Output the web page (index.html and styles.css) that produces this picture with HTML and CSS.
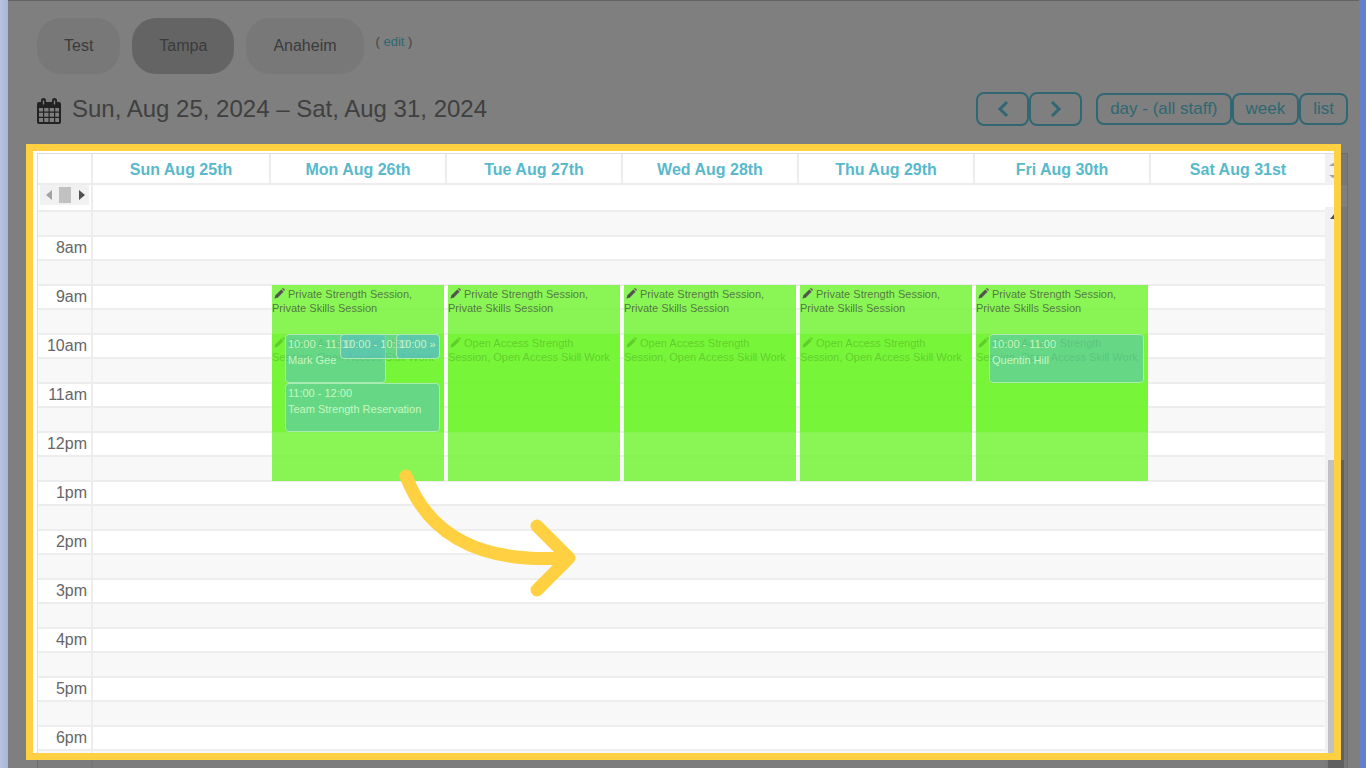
FILE: index.html
```html
<!DOCTYPE html>
<html lang="en">
<head>
<meta charset="utf-8">
<title>Staff schedule</title>
<link rel="stylesheet" href="styles.css">
</head>
<body>
<svg class="defs" aria-hidden="true">
  <symbol id="pencil" viewBox="0 0 12 12"><path d="M0.500 11.500 1.500 8 8 1.500 10.500 4 4 10.500ZM8.700 0.900 9.500 0.300Q10.300 0 11 0.800 12 1.700 11.700 2.500L11.100 3.300Z"/></symbol>
</svg>
<main class="page">
  <nav class="locations" aria-label="Locations">
    <button class="pill" type="button">Test</button>
    <button class="pill pill-active" type="button">Tampa</button>
    <button class="pill" type="button">Anaheim</button>
    <span class="edit">( <a href="#edit">edit</a> )</span>
  </nav>
  <header class="toolbar">
    <svg class="cal-icon" viewBox="0 0 24 26" aria-hidden="true">
      <path fill-rule="evenodd" d="M2 4H4V2.500Q4 0 6.500 0T9 2.500V4H15V2.500Q15 0 17.500 0T20 2.500V4H22Q24 4 24 6V24Q24 26 22 26H2Q0 26 0 24V6Q0 4 2 4ZM2 10V13.500H6V10ZM7.200 10V13.500H11.500V10ZM12.700 10V13.500H17V10ZM18.200 10V13.500H22V10ZM2 14.700V18.800H6V14.700ZM7.200 14.700V18.800H11.500V14.700ZM12.700 14.700V18.800H17V14.700ZM18.200 14.700V18.800H22V14.700ZM2 20V24H6V20ZM7.200 20V24H11.500V20ZM12.700 20V24H17V20ZM18.200 20V24H22V20ZM5.800 2.500V6.500H7.200V2.500ZM16.800 2.500V6.500H18.200V2.500Z"/>
    </svg>
    <h1 class="range">Sun, Aug 25, 2024 – Sat, Aug 31, 2024</h1>
    <div class="group">
      <button class="btn btn-nav" type="button" aria-label="Previous week"><svg viewBox="0 0 12 18"><path d="M10 2 3 9l7 7"/></svg></button>
      <button class="btn btn-nav" type="button" aria-label="Next week"><svg viewBox="0 0 12 18"><path d="m2 2 7 7-7 7"/></svg></button>
    </div>
    <div class="group">
      <button class="btn" type="button">day - (all staff)</button>
      <button class="btn" type="button">week</button>
      <button class="btn" type="button">list</button>
    </div>
  </header>
  <section class="calendar">
    <div class="viewport">
      <div class="board">
        <table class="grid">
          <colgroup><col class="col-time"><col span="7"></colgroup>
          <thead>
            <tr class="days"><th></th><th><a href="#d25">Sun Aug 25th</a></th><th><a href="#d26">Mon Aug 26th</a></th><th><a href="#d27">Tue Aug 27th</a></th><th><a href="#d28">Wed Aug 28th</a></th><th><a href="#d29">Thu Aug 29th</a></th><th><a href="#d30">Fri Aug 30th</a></th><th><a href="#d31">Sat Aug 31st</a></th></tr>
            <tr class="allday"><th><span class="hscroll"><svg viewBox="0 0 50 20"><path class="off" d="M12 5v10L6 10Z"/><path class="bar" d="M19 2h12v16H19Z"/><path class="on" d="M39 5v10l6-5Z"/></svg></span></th><td colspan="7"></td></tr>
          </thead>
          <tbody>
            <tr class="half"><th></th><td colspan="7"></td></tr>
            <tr class="hour"><th>8am</th><td colspan="7"></td></tr><tr class="half"><th></th><td colspan="7"></td></tr>
            <tr class="hour"><th>9am</th><td colspan="7"></td></tr><tr class="half"><th></th><td colspan="7"></td></tr>
            <tr class="hour"><th>10am</th><td colspan="7"></td></tr><tr class="half"><th></th><td colspan="7"></td></tr>
            <tr class="hour"><th>11am</th><td colspan="7"></td></tr><tr class="half"><th></th><td colspan="7"></td></tr>
            <tr class="hour"><th>12pm</th><td colspan="7"></td></tr><tr class="half"><th></th><td colspan="7"></td></tr>
            <tr class="hour"><th>1pm</th><td colspan="7"></td></tr><tr class="half"><th></th><td colspan="7"></td></tr>
            <tr class="hour"><th>2pm</th><td colspan="7"></td></tr><tr class="half"><th></th><td colspan="7"></td></tr>
            <tr class="hour"><th>3pm</th><td colspan="7"></td></tr><tr class="half"><th></th><td colspan="7"></td></tr>
            <tr class="hour"><th>4pm</th><td colspan="7"></td></tr><tr class="half"><th></th><td colspan="7"></td></tr>
            <tr class="hour"><th>5pm</th><td colspan="7"></td></tr><tr class="half"><th></th><td colspan="7"></td></tr>
            <tr class="hour"><th>6pm</th><td colspan="7"></td></tr><tr class="half"><th></th><td colspan="7"></td></tr>
          </tbody>
        </table>
        <div class="events">
          <div class="day"></div>
          <div class="day">
            <div class="slot open"><svg><use href="#pencil"/></svg>Open Access Strength Session, Open Access Skill Work</div>
            <div class="slot private"><svg><use href="#pencil"/></svg>Private Strength Session, Private Skills Session</div>
            <div class="booking at-ten narrow">10:00 - 11:00<br>Mark Gee</div>
            <div class="booking short middle">10:00 - 10:30</div>
            <div class="booking short last">10:00 »</div>
            <div class="booking at-eleven">11:00 - 12:00<br>Team Strength Reservation</div>
          </div>
          <div class="day">
            <div class="slot open"><svg><use href="#pencil"/></svg>Open Access Strength Session, Open Access Skill Work</div>
            <div class="slot private"><svg><use href="#pencil"/></svg>Private Strength Session, Private Skills Session</div>
          </div>
          <div class="day">
            <div class="slot open"><svg><use href="#pencil"/></svg>Open Access Strength Session, Open Access Skill Work</div>
            <div class="slot private"><svg><use href="#pencil"/></svg>Private Strength Session, Private Skills Session</div>
          </div>
          <div class="day">
            <div class="slot open"><svg><use href="#pencil"/></svg>Open Access Strength Session, Open Access Skill Work</div>
            <div class="slot private"><svg><use href="#pencil"/></svg>Private Strength Session, Private Skills Session</div>
          </div>
          <div class="day">
            <div class="slot open"><svg><use href="#pencil"/></svg>Open Access Strength Session, Open Access Skill Work</div>
            <div class="slot private"><svg><use href="#pencil"/></svg>Private Strength Session, Private Skills Session</div>
            <div class="booking at-ten">10:00 - 11:00<br>Quentin Hill</div>
          </div>
          <div class="day"></div>
        </div>
      </div>
      <div class="vscroll">
        <svg class="head" viewBox="0 0 20 31" aria-hidden="true"><path d="M3 12 7 9l4 3ZM3 21l4 3 4-3Z"/></svg>
        <div class="gap"></div>
        <div class="track"><svg viewBox="0 0 20 20" aria-hidden="true"><path d="M4 12 9 6l5 6Z"/></svg><div class="thumb"></div></div>
      </div>
    </div>
    <div class="spotlight"></div>
    <svg class="arrow" viewBox="0 0 180 134" aria-hidden="true"><path d="M10 11C33 72 86 98 168 93M141 61 173 93 141 125"/></svg>
  </section>
</main>
</body>
</html>
```
FILE: styles.css
```css
* { box-sizing: border-box; }
body {
  margin: 0;
  padding: 0 7px 0 8px;
  height: 100vh;
  background: linear-gradient(90deg, #b9c3e0 0, #a8b4d8 8px, #6480cc 9px);
  font-family: "Liberation Sans", Arial, sans-serif;
  color: #555;
}
button { font: inherit; }
a { text-decoration: none; color: #58b9cc; }
.defs { display: none; }
.page {
  position: relative;
  display: flex;
  flex-direction: column;
  height: 100%;
  overflow: hidden;
  padding: 17px 11px 0 29px;
  background: #fff;
  border-top: 1px solid #646464;
}
.locations { display: flex; align-items: flex-start; gap: 12px; }
.pill {
  height: 56px;
  padding: 0 27px;
  border: 0;
  border-radius: 24px;
  background: #f0f0f0;
  color: #777;
  font-size: 16px;
}
.pill-active { background: #c8c8c8; }
.edit { padding-top: 16px; font-size: 13px; color: #888; }
.edit a { color: #60cfe5; }
.toolbar { display: flex; align-items: center; gap: 14px; margin: 18px 0 27px; }
.cal-icon { width: 24px; height: 26px; margin: 4px -3px 0 0; fill: #444; }
.range { flex: 1; margin: 0; font-size: 24px; font-weight: 400; color: #808080; }
.group { display: flex; align-items: center; }
.btn {
  height: 32px;
  padding: 0 12px;
  border: 2px solid #60cfe5;
  border-radius: 8px;
  background: none;
  color: #60cfe5;
  font-size: 17px;
}
.btn-nav { display: grid; place-items: center; width: 53px; height: 34px; }
.btn-nav svg { width: 12px; height: 18px; fill: none; stroke: #60cfe5; stroke-width: 3; }

.calendar { position: relative; flex: 1; min-height: 0; }
.viewport {
  display: flex;
  height: 100%;
  overflow: hidden;
  border: 1px solid #ddd;
  border-bottom: 0;
}
.board { position: relative; flex: 1; }
.grid { width: 100%; table-layout: fixed; border-collapse: separate; border-spacing: 0; }
.col-time { width: 55px; }
.grid th, .grid td { padding: 0; border-bottom: 2px solid #ededed; }
.grid tr > :first-child { border-right: 2px solid #ededed; }
.grid .days th { height: 31px; padding-top: 2px; font-size: 16px; }
.days th + th + th { border-left: 2px solid #ededed; }
.allday > * { height: 27px; vertical-align: top; }
.hscroll { display: block; margin: 0 2px; background: #f1f1f1; height: 20px; }
.hscroll svg { display: block; width: 50px; height: 20px; }
.off { fill: #a3a3a3; }
.bar { fill: #c1c1c1; }
.on { fill: #505050; }
.grid tbody th {
  padding-right: 4px;
  text-align: right;
  font-size: 16px;
  font-weight: 400;
  line-height: 22px;
  color: #666;
}
.half > * { height: 25px; background: #f8f8f8; }
.hour > * { height: 24px; }

.events {
  position: absolute;
  inset: 131px 0 auto 55px;
  display: grid;
  grid-template-columns: repeat(7, 1fr);
}
.day {
  display: grid;
  grid-template-rows: repeat(4, 49px);
  grid-template-columns: 13px 55px 46px 10px 1fr 4px;
  padding: 0 1px 0 3px;
}
.slot {
  grid-column: 1 / -1;
  background: rgba(116, 244, 52, 0.84);
  color: rgba(60, 60, 60, 0.7);
  font-size: 11px;
  line-height: 14px;
  padding: 2px 4px 0 0;
}
.slot svg { width: 11px; height: 11px; margin: 0 3px -1px 2px; fill: #555; }
.open { grid-row: 2 / 4; color: #000; }
.open svg { fill: #000; }
.private { grid-row: 1 / 5; }
.booking {
  padding: 1px 2px;
  overflow: hidden;
  border: 1px solid #a9ebb0;
  border-radius: 4px;
  background: rgba(86, 185, 210, 0.5);
  color: #c6f7c0;
  font-size: 11px;
  line-height: 16px;
  white-space: nowrap;
  grid-column: 2 / 6;
}
.at-ten { grid-row: 2; }
.at-eleven { grid-row: 3; }
.narrow { grid-column: 2 / 4; }
.short { grid-row: 2; height: 25px; }
.middle { grid-column: 3 / 6; }
.last { grid-column: 5 / 6; }

.vscroll { display: flex; flex-direction: column; width: 22px; background: #f1f1f1; }
.head { height: 31px; fill: #a3a3a3; }
.gap { height: 22px; background: #fff; }
.track { flex: 1; display: flex; flex-direction: column; }
.track svg { height: 20px; fill: #505050; }
.thumb { flex: 1; margin: 233px 3px 0; background: #c1c1c1; }

.spotlight {
  position: absolute;
  inset: -9px 7px 8px -11px;
  border: 7px solid #ffd142;
  box-shadow: 0 0 0 2000px rgba(0, 0, 0, 0.5);
}
.arrow {
  position: absolute;
  left: 359px;
  top: 312px;
  width: 180px;
  height: 134px;
  fill: none;
  stroke: #ffd142;
  stroke-width: 13;
  stroke-linecap: round;
  stroke-linejoin: round;
}
```
